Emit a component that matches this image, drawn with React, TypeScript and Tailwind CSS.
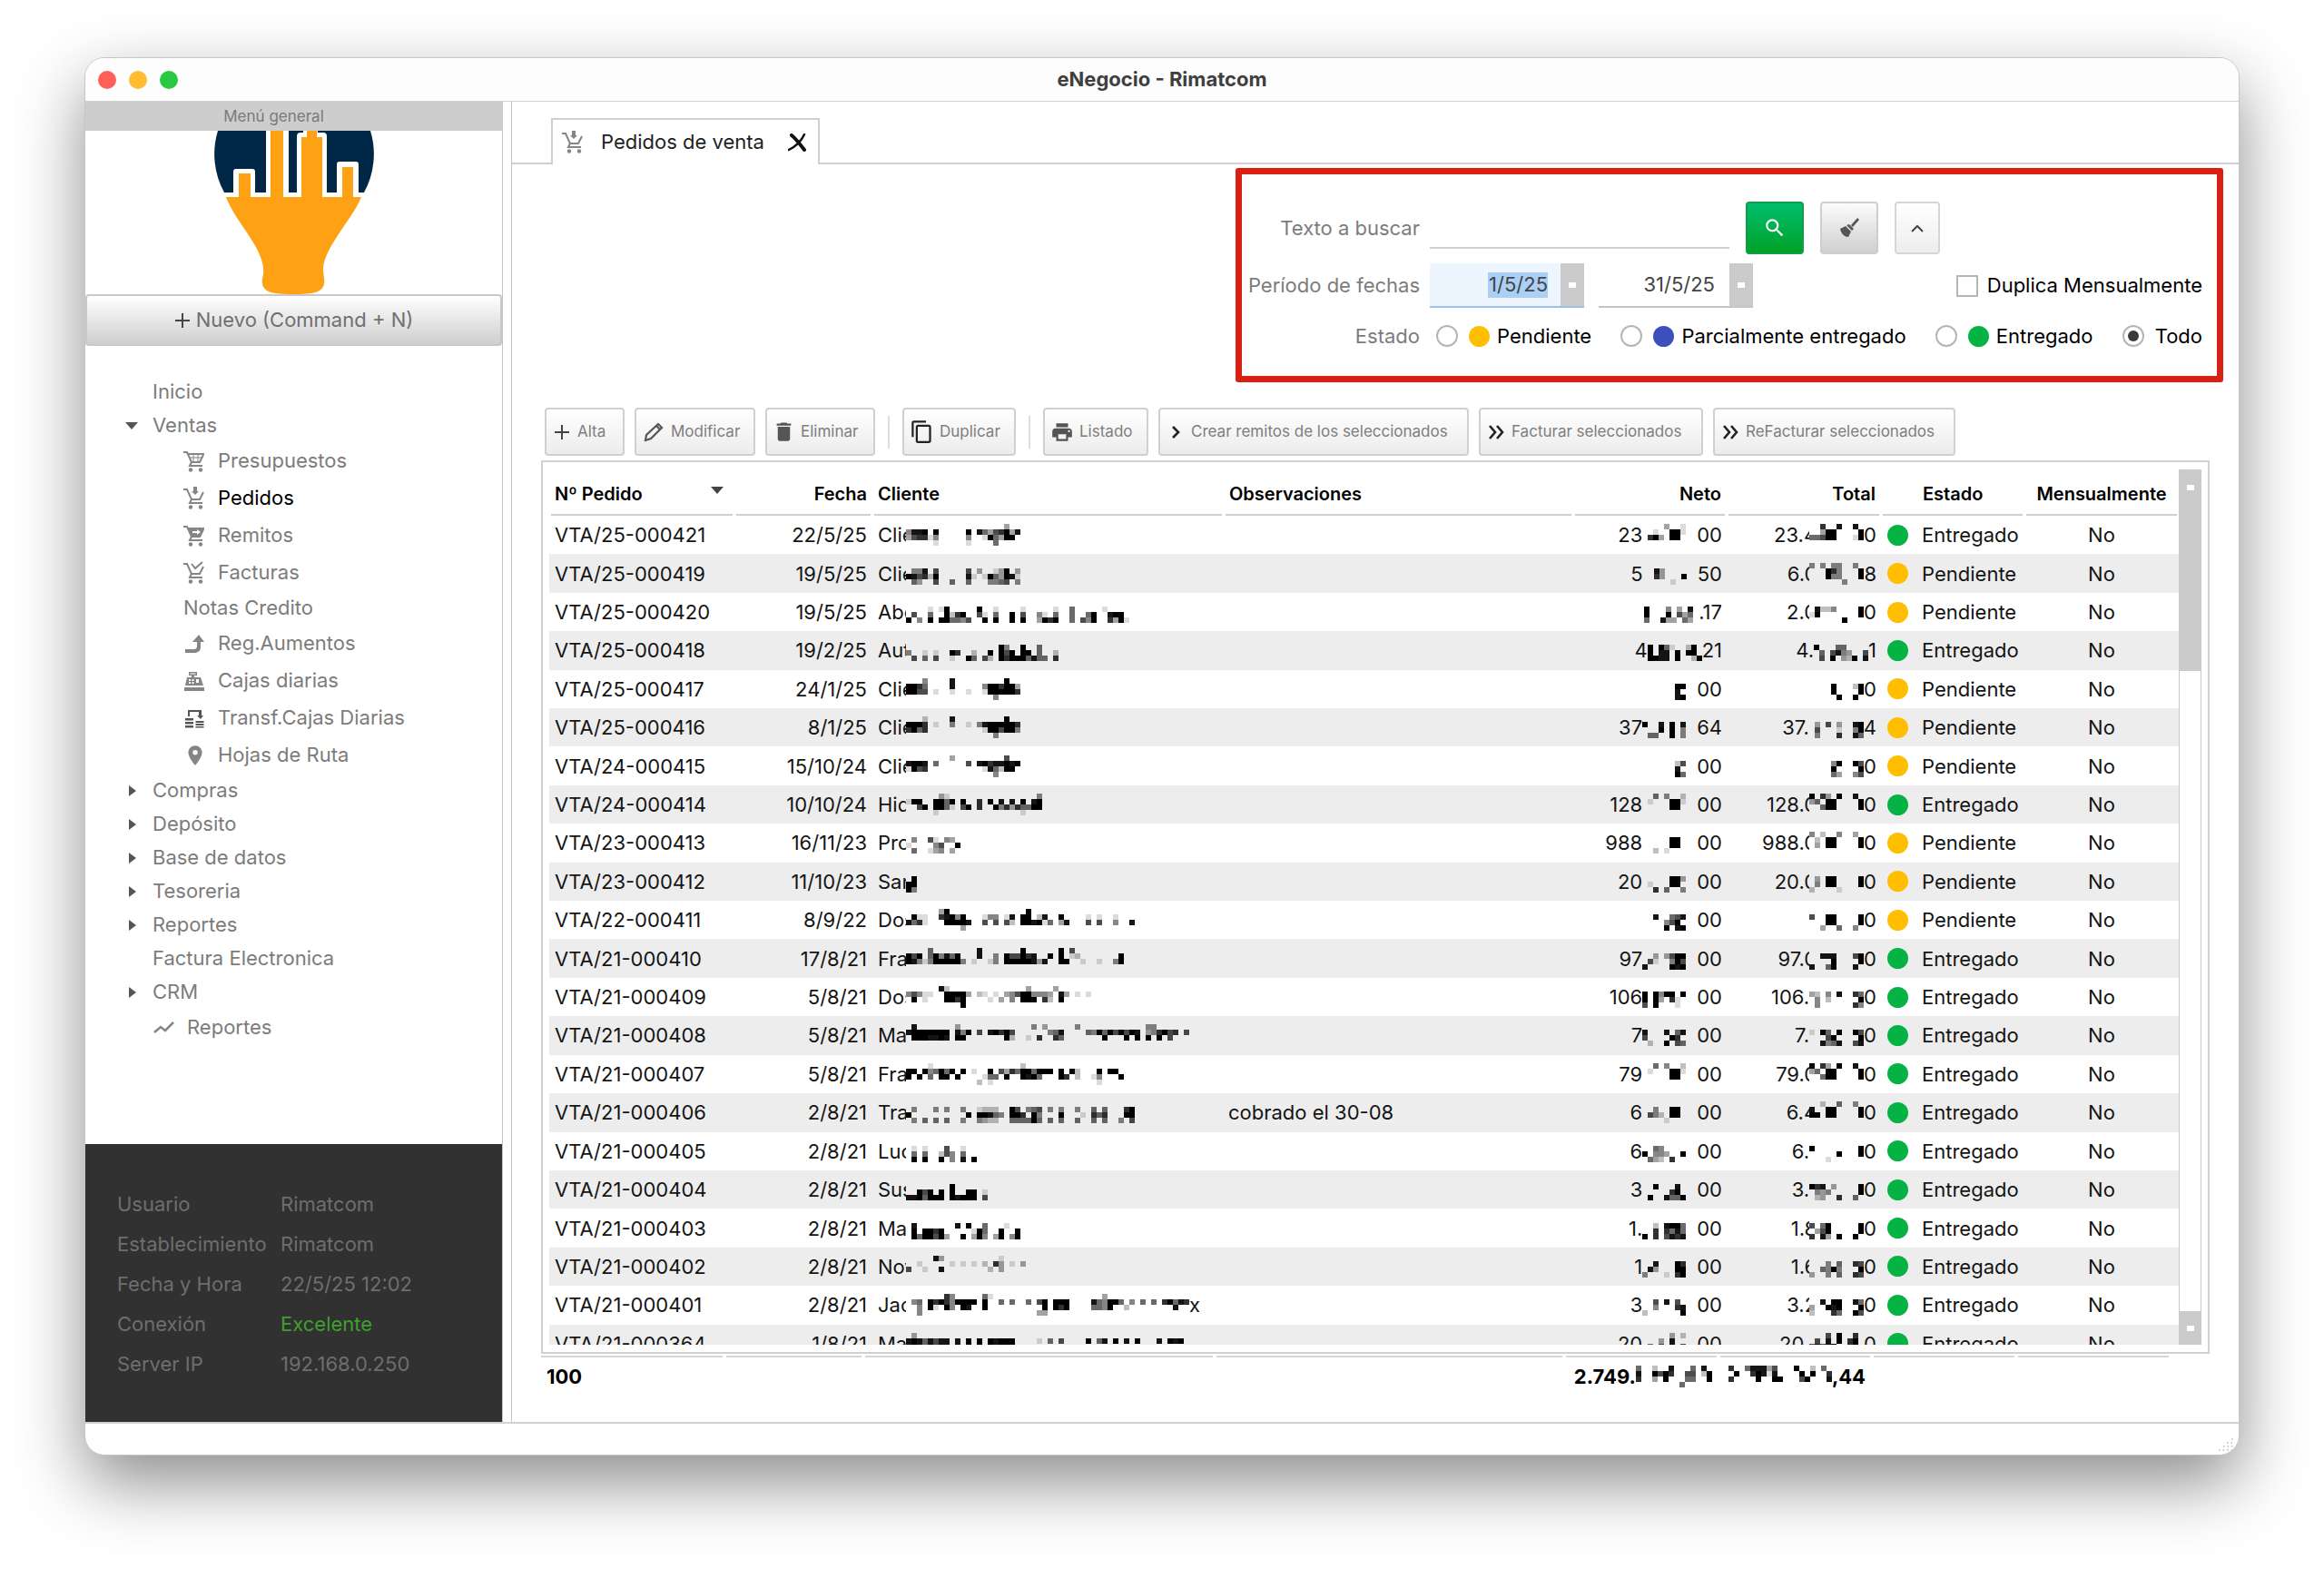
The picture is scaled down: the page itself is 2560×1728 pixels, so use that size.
import { useState, type ReactNode } from "react";
import { MdContentCopy, MdDelete, MdPlace, MdPrint, MdSearch } from "react-icons/md";

type Status = "Entregado" | "Pendiente";

type Order = {
  id: string;
  date: string;
  name: string;
  nameMask: string;
  nameTail?: string;
  note?: string;
  net: [string, string, string];
  total: [string, string, string];
  status: Status;
};

// Masks: lines split by "|", one character per 6px cell, 1 (light) to 9 (black).
const ORDERS: Order[] = [
  {
    id: "VTA/25-000421",
    date: "22/5/25",
    name: "Clie",
    nameMask:
      "..................3|4889.9.....9.85367938|367714.....4..195399|.....1.....1....5",
    net: ["23", "....3..1|..1..991|.793.99|", "00"],
    total: ["23.4", "..7..8..8|..399....9|55699...19|", "0"],
    status: "Entregado",
  },
  {
    id: "VTA/25-000419",
    date: "19/5/25",
    name: "Clie",
    nameMask:
      "|.448.6.....6.3..139.3|986729.....81.1953981|.53..6..5..5...4456.4",
    net: ["5", "|..83|..73...9|.....1", "50"],
    total: ["6.0", "4.4.44..4|...974...9|...944...9|......4", "8"],
    status: "Pendiente",
  },
  {
    id: "VTA/25-000420",
    date: "19/5/25",
    name: "Abo",
    nameMask:
      "|....1.19.....9..1....1.....1..5.....1|.6..5..9279..61.5..9.6..41.5..5..59..899|9.4.9.995546..9.9..9.9..3979..5.649..7391",
    net: ["", "|9...4.3.8|9...9.635|5..833.53", ".17"],
    total: ["2.0", "|.8224....9|19.......9|......9", "0"],
    status: "Pendiente",
  },
  {
    id: "VTA/25-000418",
    date: "19/2/25",
    name: "Aut",
    nameMask:
      "|.................94..9..5|4..1.1..97..2..9.969.99.5..2|.6.5.6..1..95.62.979995855.7",
    net: ["4", "|9.951..29|9.88.9.99|9988.9..29", "21"],
    total: ["4.", "|9...55|.5.6843..6|.6.9.329.8", "1"],
    status: "Entregado",
  },
  {
    id: "VTA/25-000417",
    date: "24/1/25",
    name: "Clie",
    nameMask:
      "...4....8.........9|9975....8.....4997993|9966.1..1..1..1999997|................4",
    net: ["", "|......99|......8|......89", "00"],
    total: ["", "|....9...29|....9....9|.....9..9", "0"],
    status: "Pendiente",
  },
  {
    id: "VTA/25-000416",
    date: "8/1/25",
    name: "Clie",
    nameMask:
      "...2....8.........9|9997.1..4..1.48999997|7957..........1996994|................4",
    net: ["37", "|9..8.9.8|...9.9.4|.55..9.4", "64"],
    total: ["37.", "|.3.6.3..89|.6...1..49|.4...7..85", "4"],
    status: "Pendiente",
  },
  {
    id: "VTA/24-000415",
    date: "15/10/24",
    name: "Clie",
    nameMask:
      "........3.........6|8998.5.....6.89788989|1967..........185299|................4",
    net: ["", "|......26|......8|......95", "00"],
    total: ["", "|....49..96|....9....9|....53..46", "0"],
    status: "Pendiente",
  },
  {
    id: "VTA/24-000414",
    date: "10/10/24",
    name: "Hid",
    nameMask:
      "......31................4|199..9959.9..7.9.8.8.9.89|..69.9951.69.7..947375599|.....1...............1",
    net: ["128", "..5.4..2|.1...991|.....99|", "00"],
    total: ["128.0", "9.73.9..8|35.99....9|..599....9|", "0"],
    status: "Entregado",
  },
  {
    id: "VTA/23-000413",
    date: "16/11/23",
    name: "Pro",
    nameMask: "|.4..61.43|1....46..9|.5..134.3",
    net: ["988", "|.....99|.....99|..2.1", "00"],
    total: ["988.0", "4.2..4..3|.2.99....9|.3.99....9|", "0"],
    status: "Pendiente",
  },
  {
    id: "VTA/23-000412",
    date: "11/10/23",
    name: "San",
    nameMask: "|.9|99|94",
    net: ["20", "|.....993|.1...99|..7.5..4", "00"],
    total: ["20.0", "|.3.99....9|.4.99....9|2....1", "0"],
    status: "Pendiente",
  },
  {
    id: "VTA/22-000411",
    date: "8/9/22",
    name: "Dos",
    nameMask:
      "......39..............9|.911..78949...144.18.99.28..9....1.1..1|8571...99998..6.6.62.998915.38...6.6..4..8|..........3",
    net: ["", "|..8..568|....469|....9.89", "00"],
    total: ["", "|6..99....9|...99....9|..3..5..4", "0"],
    status: "Pendiente",
  },
  {
    id: "VTA/21-000410",
    date: "17/8/21",
    name: "Fra",
    nameMask:
      "....5........8.......9......9.6|969.594859...8..4.966978..9.9.12.......9|98414999994.1..14.99999838..99..1..1..49|",
    net: ["97", "|..3.3699|.61..496|8....989", "00"],
    total: ["97.0", "|..888...69|....9....9|8..59...8", "0"],
    status: "Entregado",
  },
  {
    id: "VTA/21-000409",
    date: "5/8/21",
    name: "Dos",
    nameMask:
      "......82..............3....3|46411..99993.21.1.346994443.83.1.1|.9.1...9979....1.3.4.999.72.9|..........9",
    net: ["106", "|9.9499.9|9.93.71|6.9...1", "00"],
    total: ["106.", "|32.4.8..75|.4.2.....9|.4......74", "0"],
    status: "Entregado",
  },
  {
    id: "VTA/21-000408",
    date: "5/8/21",
    name: "Ma",
    nameMask:
      ".8.......3.............4.3.....4............44|89999999.849.6.89796......458....5495969698.347967.6|.9998898.99.......92..1.7..75.......9...9.9.9.9.6|",
    net: ["7", "|8...8.58|6....97|.2..9.65", "00"],
    total: ["7.", "|1.95.9..96|...69....9|..8458..68", "0"],
    status: "Entregado",
  },
  {
    id: "VTA/21-000407",
    date: "5/8/21",
    name: "Fra",
    nameMask:
      "....1................2|99.945959.9.1..9.6375995999.9.92...9.99|9.9.5.99.9....155.9..9895...97.2..14...9|.............2.1...................1",
    net: ["79", "..5.4..2|.1...991|.....99|", "00"],
    total: ["79.0", "9.73.9..8|35.99....9|..599....9|", "0"],
    status: "Entregado",
  },
  {
    id: "VTA/21-000406",
    date: "2/8/21",
    name: "Tra",
    nameMask:
      "|.4...4.4..4..1222..96.456.4.4..4..5.5...79|9..........9.99854.997.94...9...1.757...99|.4.5.5.5..4..4322..555595.5.5..5..5.5..4.6",
    note: "cobrado el 30-08",
    net: ["6", "|..4..99|.642.99|....1", "00"],
    total: ["6.4", "..2..5..4|8..99....9|99.99....9|", "0"],
    status: "Entregado",
  },
  {
    id: "VTA/21-000405",
    date: "2/8/21",
    name: "Luc",
    nameMask: "|.1.1...6..1|.5.5..264.5|.9.9..9.4.8.9",
    net: ["6", "|..54|9.443..9|.532.7", "00"],
    total: ["6.", "|9........9|.....9...9|...1", "0"],
    status: "Entregado",
  },
  {
    id: "VTA/21-000404",
    date: "2/8/21",
    name: "Sus",
    nameMask: "|........9|..969.9.9..99.1|8895999.98999.6",
    net: ["3", "|..9...8|.....79|.9..8559", "00"],
    total: ["3.", "|978.3....9|.434.....9|.23..7..5", "0"],
    status: "Entregado",
  },
  {
    id: "VTA/21-000403",
    date: "2/8/21",
    name: "Ma",
    nameMask:
      "|.8.......8.9..5...1|.9.9979.....195..9..9|.9599693..9.394.39.49",
    net: ["1.", "|..2.8995|..7.7585|9.7.6878", "00"],
    total: ["1.8", "|6.59.....9|.369.....9|7.83.9..9", "0"],
    status: "Entregado",
  },
  {
    id: "VTA/21-000402",
    date: "2/8/21",
    name: "Nov",
    nameMask:
      ".....83..........1|..1.....1.1.1.2.73.1.3|6..1..8........2.3|",
    net: ["1", "|..8...97|.83...99|4...1.79", "00"],
    total: ["1.6", "|...4.5..76|..5494...9|3..4.5..76", "0"],
    status: "Entregado",
  },
  {
    id: "VTA/21-000401",
    date: "2/8/21",
    name: "Jac",
    nameMask:
      ".......74.....51....................3|.45.979749999.9..5.5..5.69.999....854995.4.5.5.79587|..4.91.94.98..9..........9.979....5549..2........8|..4.....................33",
    nameTail: "x",
    net: ["3", "|..6.8.6|..4...78|2......9", "00"],
    total: ["3.2", "|..8.99..85|3..989...9|2...75..96", "0"],
    status: "Entregado",
  },
  {
    id: "VTA/21-000364",
    date: "1/8/21",
    name: "Ma",
    nameMask:
      ".3|89858688.8.9.9.98999....1.5.6....9.58.9.8.9...8.989.9|89858688.8.9.9.98999|",
    net: ["20", ".....3.2|...3.8|.5.6.8.6|", "00"],
    total: ["20.", "...6.9..7|.6.8.9.79|68689..79|", "0"],
    status: "Entregado",
  },
];

const TOTALS_MASK =
  "5..2..8...5.8....7..588836...9..2.5|8..9697..66.29....9..79818....9.9..7|7..3.9...55..9...7....9..99...69...8|........5";

function Mosaic({ map, cols, bg = "" }: { map: string; cols: number; bg?: string }) {
  const lines = map.split("|");
  return (
    <svg
      width={cols * 6}
      height={24}
      viewBox={`0 0 ${cols * 6} 24`}
      className={`relative block shrink-0 ${bg}`}
      shapeRendering="crispEdges"
      aria-hidden
    >
      {lines.flatMap((line, y) =>
        [...line].map((c, x) =>
          c === "." ? null : (
            <rect
              key={`${x}-${y}`}
              x={x * 6}
              y={y * 6}
              width={6}
              height={6}
              fillOpacity={Math.min(1, Number(c) / 9 + 0.03)}
            />
          ),
        ),
      )}
    </svg>
  );
}

function Plus() {
  return (
    <svg viewBox="0 0 18 18" className="size-[18px]" fill="none" stroke="#444" strokeWidth={2}>
      <path d="M9 1v16M1 9h16" />
    </svg>
  );
}

function Cart({ children, basket = true }: { children?: ReactNode; basket?: boolean }) {
  return (
    <svg viewBox="0 0 24 26" className="w-6 h-[26px]" fill="none" stroke="currentColor" strokeWidth={2}>
      <path d="M0 3h4l5 11h9l4-8" />
      {basket && <path d="M5 5h18" />}
      <path d="M9 14l-2 4h14" />
      <circle cx="8" cy="22.5" r="2.2" fill="currentColor" stroke="none" />
      <circle cx="19" cy="22.5" r="2.2" fill="currentColor" stroke="none" />
      {children}
    </svg>
  );
}

function CartDown() {
  return (
    <Cart basket={false}>
      <path d="M13 0v5" strokeWidth={4} />
      <path d="M9 5h8l-4 4z" fill="currentColor" stroke="none" />
    </Cart>
  );
}

const ICONS: Record<string, ReactNode> = {
  grid: (
    <Cart>
      <path d="M6 9h15M11 5v9M16 5v9" strokeWidth={1} />
    </Cart>
  ),
  down: <CartDown />,
  full: (
    <Cart>
      <path d="M5 5h18l-4 9H9z" fill="currentColor" stroke="none" />
      <path d="M10 9h6" stroke="#fff" />
      <path d="M15 6l4 3-4 3z" fill="#fff" stroke="none" />
    </Cart>
  ),
  check: (
    <Cart basket={false}>
      <path d="M9 3l4 5 8-7" />
    </Cart>
  ),
  up: (
    <svg viewBox="0 0 24 24" className="size-6" fill="currentColor">
      <path d="M2 18h9c3 0 4-1 4-4V10h-5l7-8 6 8h-4v5c0 5-3 7-7 7H2z" />
    </svg>
  ),
  register: (
    <svg viewBox="0 0 24 24" className="size-6" fill="currentColor">
      <path d="M6 2h9v4h-3v2h7l3 9H2l2-9h5V6H6z" />
      <path d="M1 19h22v4H1z" />
      <path d="M7.500 3.500h6v1h-6zM6 10h2v2H6zm3.500 0h2v2h-2zM6 13h2v2H6zm3.500 0h2v2h-2zM14 10h3v4h-3z" fill="#fff" />
    </svg>
  ),
  transfer: (
    <svg viewBox="0 0 24 24" className="size-6 text-[#555]" fill="currentColor">
      <path d="M5 3h15v6h2l-3 4-4-4h2V5H7v5H5zM2 12h9v2.500H2zM2 16h9v2.500H2zM2 20h9v2.500H2zM13.500 15h9v2h-9zM13.500 18h9v2h-9zM13.500 21h9v1.500h-9z" />
    </svg>
  ),
  pin: <MdPlace className="size-[26px]" />,
  chart: (
    <svg viewBox="0 0 24 24" className="size-6" fill="none" stroke="currentColor" strokeWidth={2.5}>
      <path d="M2 17l7-6 5 4 9-9" />
    </svg>
  ),
};

type MenuNode = { label: string; arrow?: "open" | "closed"; icon?: string; child?: boolean };

const MENU: MenuNode[] = [
  { label: "Inicio" },
  { label: "Ventas", arrow: "open" },
  { label: "Presupuestos", icon: "grid", child: true },
  { label: "Pedidos", icon: "down", child: true },
  { label: "Remitos", icon: "full", child: true },
  { label: "Facturas", icon: "check", child: true },
  { label: "Notas Credito", child: true },
  { label: "Reg.Aumentos", icon: "up", child: true },
  { label: "Cajas diarias", icon: "register", child: true },
  { label: "Transf.Cajas Diarias", icon: "transfer", child: true },
  { label: "Hojas de Ruta", icon: "pin", child: true },
  { label: "Compras", arrow: "closed" },
  { label: "Depósito", arrow: "closed" },
  { label: "Base de datos", arrow: "closed" },
  { label: "Tesoreria", arrow: "closed" },
  { label: "Reportes", arrow: "closed" },
  { label: "Factura Electronica" },
  { label: "CRM", arrow: "closed" },
  { label: "Reportes", icon: "chart" },
];

const SESSION = [
  ["Usuario", "Rimatcom"],
  ["Establecimiento", "Rimatcom"],
  ["Fecha y Hora", "22/5/25 12:02"],
  ["Conexión", "Excelente"],
  ["Server IP", "192.168.0.250"],
];

function Logo() {
  return (
    <svg viewBox="0 0 176 180" className="w-44 h-[180px]" aria-label="eNegocio">
      <path d="M4 0A88 88 0 0 0 11 68H165A88 88 0 0 0 172 0z" fill="#002846" />
      <path
        d="M21 73V45q0-3 3-3h18q3 0 3 3v23h12V0h25v68h9V6q0-4 4-4h3V0h16v2h6q4 0 4 4v62h11V37q0-3 3-3h18q3 0 3 3v36z"
        fill="#fff"
      />
      <path d="M11 68h10v5H11zM155 68h12v5h-12z" fill="#fff" />
      <path d="M82 0h9v68h-9z" fill="#002846" />
      <path
        d="M13 73H27V47h13v26h22V0h14v73h20V7h6V0h11v7h6v66h22V40h12v33h9C152 98 121 128 120 152c0 7 2 11 1 17-2 9-12 11-34 11s-32-2-34-11c-1-6 2-10 1-17C53 128 22 98 13 73z"
        fill="#ffa114"
      />
    </svg>
  );
}

function Sidebar() {
  return (
    <aside className="w-[460px] shrink-0 flex flex-col border-r border-[#c4c4c4]">
      <div className="h-8 pr-11 bg-[#cdcdcd] text-[#7a7a7a] text-[17px] leading-8 text-center">
        Menú general
      </div>
      <div className="flex justify-center">
        <Logo />
      </div>
      <button className="h-[57px] flex items-center justify-center gap-[6px] rounded-[4px] border-2 border-[#c9c9c9] bg-linear-to-b from-white to-[#cfcfcf] text-[22px] text-[#707070]">
        <Plus />
        Nuevo (Command + N)
      </button>
      <nav className="flex-1 pt-8 text-[22px] text-[#7c7c7c]">
        <ul>
          {MENU.map((node, i) => (
            <li
              key={i}
              className={`flex items-center ${node.icon ? "h-[41px]" : "h-[37px]"} ${node.child ? "pl-[108px]" : "pl-11"}`}
            >
              {!node.child && (
                <span className="w-[30px] shrink-0 text-[#555]">
                  {node.arrow === "open" && (
                    <svg viewBox="0 0 14 8" className="w-3.5 h-2" fill="currentColor">
                      <path d="M0 0h14L7 8z" />
                    </svg>
                  )}
                  {node.arrow === "closed" && (
                    <svg viewBox="0 0 8 12" className="ml-1 w-2 h-3" fill="currentColor">
                      <path d="M0 0v12l8-6z" />
                    </svg>
                  )}
                </span>
              )}
              <a
                href="#"
                className={`flex items-center whitespace-nowrap ${node.label === "Pedidos" ? "text-black" : ""}`}
              >
                {node.icon && (
                  <span className="w-[38px] flex text-[#858585]">{ICONS[node.icon]}</span>
                )}
                {node.label}
              </a>
            </li>
          ))}
        </ul>
      </nav>
      <dl className="grid grid-cols-[180px_1fr] auto-rows-[44px] items-center h-[306px] shrink-0 pt-11 pl-[35px] bg-[#313131] text-[22px] text-[#6e6e6e]">
        {SESSION.map(([label, value]) => (
          <div key={label} className="contents">
            <dt>{label}</dt>
            <dd className={value === "Excelente" ? "text-[#3fa02c]" : ""}>{value}</dd>
          </div>
        ))}
      </dl>
    </aside>
  );
}

function Spin({ label }: { label: string }) {
  return (
    <button aria-label={label} className="w-[26px] flex items-center justify-center bg-[#cbcbcb]">
      <span className="w-2 h-[6px] bg-white" />
    </button>
  );
}

function StateOption({
  label,
  dot,
  checked,
  onChange,
}: {
  label: string;
  dot?: string;
  checked: boolean;
  onChange: () => void;
}) {
  return (
    <label className="flex items-center text-black">
      <input
        type="radio"
        name="estado"
        checked={checked}
        onChange={onChange}
        className="appearance-none size-6 mr-3 rounded-full border-2 border-[#b5b5b5] bg-white grid place-items-center before:size-3 before:rounded-full checked:before:bg-[#3a3a3a]"
      />
      {dot && <span className={`size-[23px] mr-2 rounded-full ${dot}`} />}
      {label}
    </label>
  );
}

function Filters() {
  const [state, setState] = useState("Todo");
  return (
    <form
      onSubmit={(e) => e.preventDefault()}
      className="w-[1088px] h-[236px] ml-auto mr-[17px] mt-1 pt-[30px] pr-4 border-[7px] border-[#da2013] rounded-[3px] text-[22px] text-[#7c7c7c]"
    >
      <div className="flex items-center h-[58px]">
        <label htmlFor="q" className="w-[196px] text-right">
          Texto a buscar
        </label>
        <input id="q" className="w-[330px] h-[46px] ml-[11px] border-b-2 border-[#cfcfcf] outline-none" />
        <button
          aria-label="Buscar"
          className="w-16 h-[58px] ml-[18px] flex items-center justify-center rounded-[4px] border-2 border-[#0f9f4a] bg-linear-to-b from-[#00bd6c] to-[#00a122] text-white"
        >
          <MdSearch className="size-[26px]" />
        </button>
        <button
          aria-label="Limpiar"
          className="w-16 h-[58px] ml-[18px] flex items-center justify-center rounded-[4px] border-2 border-[#cecece] bg-linear-to-b from-[#fbfbfb] to-[#cfcfcf] text-[#555]"
        >
          <svg viewBox="0 0 24 24" className="size-6" fill="currentColor">
            <path d="M21 1l2 2-7 8-2-2zM12 8l5 5-2 2-6-6zM8 10l6 6-3 6C6 22 3 18 2 13z" />
          </svg>
        </button>
        <button
          aria-label="Contraer"
          className="w-[50px] h-[58px] ml-[18px] flex items-center justify-center rounded-[4px] border-2 border-[#d6d6d6] bg-linear-to-b from-white to-[#ededed] text-[#444]"
        >
          <svg viewBox="0 0 14 9" className="w-3.5 h-[9px]" fill="none" stroke="currentColor" strokeWidth={2}>
            <path d="M1 8l6-6 6 6" />
          </svg>
        </button>
      </div>
      <div className="flex items-center h-[49px] mt-[10px]">
        <label htmlFor="from" className="w-[196px] text-right">
          Período de fechas
        </label>
        <div className="flex h-[49px] ml-[11px] border-b-2 border-[#9dbfe8]">
          <span className="w-36 flex items-center justify-end pr-[14px] bg-[#edf6fe]">
            <input
              id="from"
              defaultValue="1/5/25"
              className="w-[66px] h-7 bg-[#aad0f6] text-right text-[#444] outline-none"
            />
          </span>
          <Spin label="Elegir desde" />
        </div>
        <div className="flex h-[49px] ml-4 border-b-2 border-[#c4c4c4]">
          <input
            aria-label="Hasta"
            defaultValue="31/5/25"
            className="w-36 pr-4 text-right text-[#444] outline-none"
          />
          <Spin label="Elegir hasta" />
        </div>
        <label className="flex items-center ml-auto text-black">
          <input
            type="checkbox"
            className="appearance-none size-6 mr-[10px] border-2 border-[#b5b5b5] bg-white"
          />
          Duplica Mensualmente
        </label>
      </div>
      <fieldset className="flex items-center h-[62px]">
        <span className="w-[196px] shrink-0 text-right">Estado</span>
        <div className="flex-1 flex items-center justify-between ml-[18px]">
          <StateOption label="Pendiente" dot="bg-[#ffbf00]" checked={state === "Pendiente"} onChange={() => setState("Pendiente")} />
          <StateOption label="Parcialmente entregado" dot="bg-[#3b50bd]" checked={state === "Parcial"} onChange={() => setState("Parcial")} />
          <StateOption label="Entregado" dot="bg-[#05b344]" checked={state === "Entregado"} onChange={() => setState("Entregado")} />
          <StateOption label="Todo" checked={state === "Todo"} onChange={() => setState("Todo")} />
        </div>
      </fieldset>
    </form>
  );
}

function Tool({ icon, label, width }: { icon: ReactNode; label: string; width: string }) {
  return (
    <button
      className={`${width} h-[53px] flex items-center gap-2 pl-2 rounded-[4px] border-2 border-[#d0d0d0] bg-linear-to-b from-white to-[#ececec] text-[17px] text-[#7e7e7e] whitespace-nowrap`}
    >
      {icon}
      {label}
    </button>
  );
}

function DoubleChevron() {
  return (
    <svg viewBox="0 0 18 16" className="w-[18px] h-4" fill="none" stroke="#222" strokeWidth={2.6}>
      <path d="M2 1l6 7-6 7M10 1l6 7-6 7" />
    </svg>
  );
}

function Toolbar() {
  return (
    <div className="flex items-center gap-[11px] mt-7 ml-9">
      <Tool width="w-[88px]" label="Alta" icon={<Plus />} />
      <Tool
        width="w-[133px]"
        label="Modificar"
        icon={
          <svg viewBox="0 0 22 22" className="size-[22px]" fill="none" stroke="#555" strokeWidth={2.2}>
            <path d="M2 20l1-6L16 2l4 4L8 18zM14 4l4 4" />
          </svg>
        }
      />
      <Tool width="w-[121px]" label="Eliminar" icon={<MdDelete className="size-[27px] -mx-[3px] text-[#555]" />} />
      <span className="w-[2px] h-9 mx-[3px] bg-[#ddd]" />
      <Tool width="w-[125px]" label="Duplicar" icon={<MdContentCopy className="size-[27px] -mx-[2px] text-[#222]" />} />
      <span className="w-[2px] h-9 mx-[3px] bg-[#ddd]" />
      <Tool width="w-[116px]" label="Listado" icon={<MdPrint className="size-[26px] -mx-[2px] text-[#555]" />} />
      <Tool
        width="w-[342px]"
        label="Crear remitos de los seleccionados"
        icon={
          <svg viewBox="0 0 18 14" className="w-[18px] h-3.5" fill="none" stroke="#222" strokeWidth={2.6}>
            <path d="M6 1l6 6-6 6" />
          </svg>
        }
      />
      <Tool width="w-[247px]" label="Facturar seleccionados" icon={<DoubleChevron />} />
      <Tool width="w-[267px]" label="ReFacturar seleccionados" icon={<DoubleChevron />} />
    </div>
  );
}

function Columns() {
  return (
    <colgroup>
      <col className="w-[204px]" />
      <col className="w-[152px]" />
      <col className="w-[387px]" />
      <col />
      <col className="w-[169px]" />
      <col className="w-[170px]" />
      <col className="w-[158px]" />
      <col className="w-[170px]" />
    </colgroup>
  );
}

const HEADERS = [
  { label: "Nº Pedido", align: "pl-1 justify-between pr-[10px]" },
  { label: "Fecha", align: "justify-end pr-1" },
  { label: "Cliente", align: "pl-1" },
  { label: "Observaciones", align: "pl-1" },
  { label: "Neto", align: "justify-end pr-1" },
  { label: "Total", align: "justify-end pr-1" },
  { label: "Estado", align: "pl-11" },
  { label: "Mensualmente", align: "justify-center" },
];

function Amount({ parts, bg }: { parts: [string, string, string]; bg: string }) {
  const [head, mask, tail] = parts;
  // A leading figure with a decimal digit runs under the mask.
  const under = /\.\d$/.test(head) ? "-mr-2" : "";
  return (
    <span className="flex items-center justify-end">
      <span className={under}>{head}</span>
      <Mosaic map={mask} cols={10} bg={bg} />
      {tail}
    </span>
  );
}

function OrdersTable() {
  return (
    <div className="flex flex-1 min-h-0 mx-8 mt-[5px] py-2 px-[7px] border-2 border-[#d0d0d0]">
      <div className="flex-1 min-h-0 overflow-hidden">
        <table className="w-full h-[984px] table-fixed border-collapse text-[22px] leading-7 text-[#141414] whitespace-nowrap">
          <Columns />
          <thead>
            <tr className="h-[51px]">
              {HEADERS.map((h) => (
                <th key={h.label} scope="col" className="p-0 text-[20px] font-semibold text-black align-bottom">
                  <div className={`flex items-center h-[51px] mx-[2px] pt-1 border-b-2 border-[#cfcfcf] ${h.align}`}>
                    {h.label}
                    {h.label === "Nº Pedido" && (
                      <svg viewBox="0 0 14 8" className="w-3.5 h-2 mb-2" fill="#444">
                        <path d="M0 0h14L7 8z" />
                      </svg>
                    )}
                  </div>
                </th>
              ))}
            </tr>
          </thead>
          <tbody>
            {ORDERS.map((o, i) => {
              const bg = i % 2 ? "bg-[#ededed]" : "bg-white";
              return (
                <tr key={o.id} className={bg}>
                  <td className="p-0 pl-[6px]">{o.id}</td>
                  <td className="p-0 pr-[6px] text-right">{o.date}</td>
                  <td className="p-0 pl-[6px]">
                    <span className="flex items-center">
                      <span className="w-[31px]">{o.name}</span>
                      <Mosaic map={o.nameMask} cols={52} bg={bg} />
                      {o.nameTail}
                    </span>
                  </td>
                  <td className="p-0 pl-[5px]">{o.note}</td>
                  <td className="p-0 pr-[5px]">
                    <Amount parts={o.net} bg={bg} />
                  </td>
                  <td className="p-0 pr-[5px]">
                    <Amount parts={o.total} bg={bg} />
                  </td>
                  <td className="p-0 pl-[7px]">
                    <span className="flex items-center gap-[15px]">
                      <span
                        className={`size-[23px] rounded-full ${o.status === "Entregado" ? "bg-[#05b344]" : "bg-[#ffbf00]"}`}
                      />
                      {o.status}
                    </span>
                  </td>
                  <td className="p-0 text-center">No</td>
                </tr>
              );
            })}
          </tbody>
        </table>
      </div>
      <div className="w-[25px] flex flex-col bg-white border-x border-[#c9c9c9]">
        <div className="h-[222px] pt-[17px] flex justify-center bg-[#cbcbcb]">
          <span className="w-2 h-[6px] bg-white" />
        </div>
        <div className="h-[37px] mt-auto flex items-center justify-center bg-[#cbcbcb]">
          <span className="w-2 h-[6px] bg-white" />
        </div>
      </div>
    </div>
  );
}

function Totals() {
  return (
    <div className="h-[75px] shrink-0 pt-[2px] ml-8 mr-[77px] text-[22px] font-bold text-black">
      <div className="grid grid-cols-[200px_149px_383px_1fr_166px_165px_155px_166px] gap-x-1">
        {HEADERS.map((h) => (
          <span key={h.label} className="h-[2px] bg-[#d6d6d6]" />
        ))}
      </div>
      <div className="flex items-center h-[42px] pl-[6px] pr-[334px]">
        100
        <span className="ml-auto flex items-center">
          2.749.
          <Mosaic map={TOTALS_MASK} cols={36} />
          ,44
        </span>
      </div>
    </div>
  );
}

export default function App() {
  return (
    <div
      className="h-screen flex pt-[63px] px-[93px] pb-[125px] bg-white"
      style={{ fontFamily: 'Inter, "Liberation Sans", sans-serif' }}
    >
      <div className="flex-1 flex flex-col overflow-hidden rounded-[22px] border border-[#c6c6c6] bg-white shadow-[0_30px_75px_rgba(0,0,0,0.45)]">
        <header className="grid grid-cols-[1fr_auto_1fr] items-center h-12 shrink-0 px-[14px] border-b border-[#d2d2d2] bg-[#fdfdfd]">
          <div className="flex gap-[14px]">
            <span className="size-5 rounded-full bg-[#fe5f57]" />
            <span className="size-5 rounded-full bg-[#febc2e]" />
            <span className="size-5 rounded-full bg-[#28c840]" />
          </div>
          <h1 className="text-[22px] font-bold text-[#3f3f3f]">eNegocio - Rimatcom</h1>
        </header>

        <div className="flex flex-1 min-h-0">
          <Sidebar />
          <main className="flex-1 min-w-0 flex flex-col ml-[9px] border-l border-[#c4c4c4]">
            <div className="flex pt-[18px]">
              <span className="w-[43px] border-b-2 border-[#cfcfcf]" />
              <div className="flex items-center w-[296px] h-[51px] pl-[10px] border-2 border-b-0 border-[#cfcfcf] text-[22px] text-[#222]">
                <span className="w-[43px] text-[#858585]">
                  <CartDown />
                </span>
                Pedidos de venta
                <button aria-label="Cerrar" className="ml-auto mr-[13px]">
                  <svg viewBox="0 0 20 20" className="size-5" fill="none" stroke="#111" strokeLinecap="round">
                    <path d="M4 2q4 3 14 16" strokeWidth={4} />
                    <path d="M18 1Q13 12 1 18" strokeWidth={2.5} />
                  </svg>
                </button>
              </div>
              <span className="flex-1 border-b-2 border-[#cfcfcf]" />
            </div>
            <Filters />
            <Toolbar />
            <OrdersTable />
            <Totals />
          </main>
        </div>

        <footer className="h-9 shrink-0 flex items-end justify-end p-1 border-t-2 border-[#d2d2d2]">
          <svg viewBox="0 0 18 18" className="size-[18px]" stroke="#b9b9b9" strokeWidth={1.500} strokeDasharray="1.5 3">
            <path d="M0 17h18M5 13h13M9 9h9M14 5h4" />
          </svg>
        </footer>
      </div>
    </div>
  );
}
